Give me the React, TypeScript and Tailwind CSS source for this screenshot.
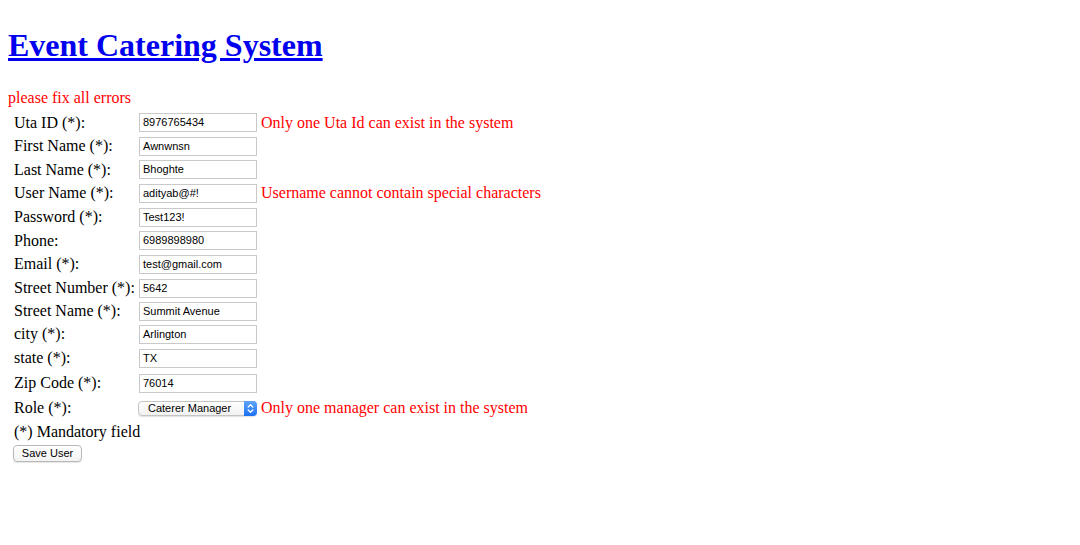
import React from "react";

type Row = {
  label: string;
  value: string;
  h: string;
  error?: string;
};

const rows: Row[] = [
  { label: "Uta ID (*):", value: "8976765434", h: "h-[23px]", error: "Only one Uta Id can exist in the system" },
  { label: "First Name (*):", value: "Awnwnsn", h: "h-[24px]" },
  { label: "Last Name (*):", value: "Bhoghte", h: "h-[23px]" },
  { label: "User Name (*):", value: "adityab@#!", h: "h-[24px]", error: "Username cannot contain special characters" },
  { label: "Password (*):", value: "Test123!", h: "h-[24px]" },
  { label: "Phone:", value: "6989898980", h: "h-[23px]" },
  { label: "Email (*):", value: "test@gmail.com", h: "h-[24px]" },
  { label: "Street Number (*):", value: "5642", h: "h-[24px]" },
  { label: "Street Name (*):", value: "Summit Avenue", h: "h-[22px]" },
  { label: "city (*):", value: "Arlington", h: "h-[24px]" },
  { label: "state (*):", value: "TX", h: "h-[24px]" },
  { label: "Zip Code (*):", value: "76014", h: "h-[26px]" },
];

export default function App() {
  return (
    <div className="bg-white min-h-[545px] px-2 font-['Liberation_Serif',serif] text-black text-[16px]">
      <h1 className="pt-[27px] m-0 text-[32px] leading-[37px] font-bold">
        <a href="#" className="text-[#0000ee] underline">
          Event Catering System
        </a>
      </h1>
      <div className="mt-[25px] h-[22px] leading-[18px] text-[#ff0000]">please fix all errors</div>
      <div className="flex flex-col">
        {rows.map((r) => (
          <div key={r.label} className={`flex items-center ${r.h}`}>
            <div className="w-[131px] pl-[6px] leading-[18px] whitespace-nowrap">{r.label}</div>
            <div className="w-[118px] h-[19px] border border-[#c9c9c9] bg-white pl-[3px] flex items-center font-['Liberation_Sans',Arial,sans-serif] text-[11px] text-black">
              {r.value}
            </div>
            {r.error && <div className="ml-[4px] leading-[18px] text-[#ff0000] whitespace-nowrap">{r.error}</div>}
          </div>
        ))}
        <div className="flex items-center h-[24px]">
          <div className="w-[131px] pl-[6px] leading-[18px]">Role (*):</div>
          <div className="relative w-[119px] h-[15px] rounded-[4px] border border-[#c4c4c4] bg-gradient-to-b from-white to-[#f1f1f1] shadow-[0_1px_1px_rgba(0,0,0,0.12)] flex items-center font-['Liberation_Sans',Arial,sans-serif] text-[11px] text-black -ml-[1px]">
            <span className="pl-[9px] leading-[13px]">Caterer Manager</span>
            <div className="absolute right-[-1px] top-[-1px] w-[13px] h-[15px] rounded-r-[4px] bg-gradient-to-b from-[#5ea6fb] to-[#1a6ff0] flex items-center justify-center">
              <svg width="7" height="11" viewBox="0 0 7 11" fill="none" stroke="white" strokeWidth="1.3" strokeLinecap="round" strokeLinejoin="round">
                <path d="M1.2 4 L3.5 1.8 L5.8 4" />
                <path d="M1.2 7 L3.5 9.2 L5.8 7" />
              </svg>
            </div>
          </div>
          <div className="ml-[4px] leading-[18px] text-[#ff0000] whitespace-nowrap">Only one manager can exist in the system</div>
        </div>
        <div className="flex items-center h-[23px] pl-[6px] leading-[18px]">(*) Mandatory field</div>
        <div className="pl-[5px] pt-[2px]">
          <button className="w-[69px] h-[17px] rounded-[4px] border border-[#b8b8b8] bg-gradient-to-b from-white to-[#f3f3f3] shadow-[0_1px_1px_rgba(0,0,0,0.1)] font-['Liberation_Sans',Arial,sans-serif] text-[11px] leading-[15px] text-black flex items-center justify-center">
            Save User
          </button>
        </div>
      </div>
    </div>
  );
}
